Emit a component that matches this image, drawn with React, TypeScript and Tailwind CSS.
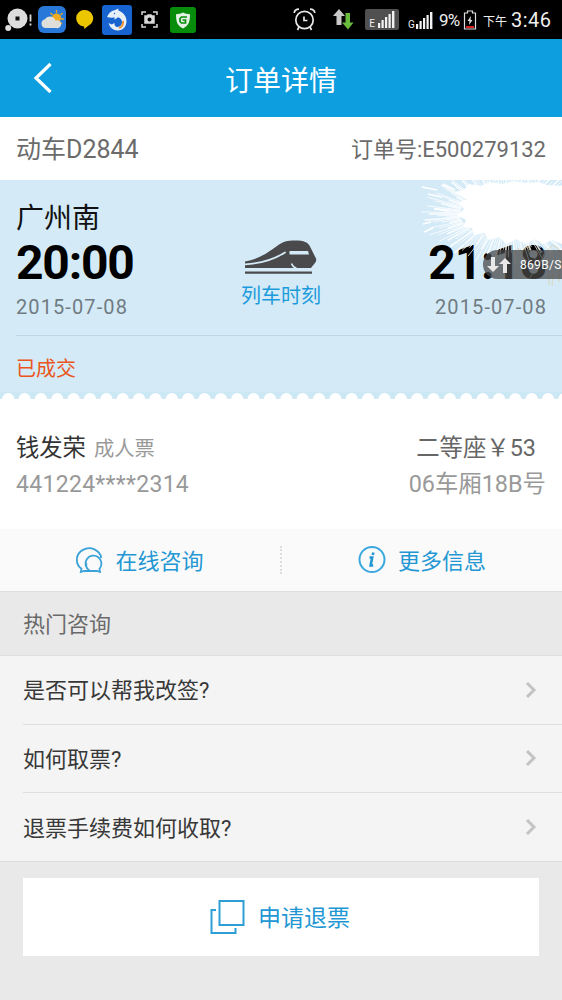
import type { ReactNode } from "react";

const questions = ["是否可以帮我改签?", "如何取票?", "退票手续费如何收取?"];

// spark strokes radiating from the burst behind the arrival station
const sparks = Array.from({ length: 150 }, (_, i) => {
  const angle = (i / 150) * Math.PI * 2;
  const reach = 0.8 + ((i * 37) % 29) / 75;
  return {
    x1: 90 + Math.cos(angle) * 50,
    y1: 34 + Math.sin(angle) * 24,
    x2: 90 + Math.cos(angle) * 76 * reach,
    y2: 34 + Math.sin(angle) * 44 * reach,
  };
});

function SignalIcon({ label, className }: { label: string; className: string }) {
  return (
    <div className={`flex shrink-0 items-end ${className}`}>
      <span className="text-[10px] leading-[9px]">{label}</span>
      <svg className="h-[17px] w-[18px]" viewBox="0 0 18 17" fill="#f2f2f2">
        <rect x="1" y="12" width="2.200" height="5" />
        <rect x="4.500" y="9" width="2.200" height="8" />
        <rect x="8" y="6" width="2.200" height="11" />
        <rect x="11.500" y="3" width="2.200" height="14" />
        <rect x="15" y="0" width="2.400" height="17" />
      </svg>
    </div>
  );
}

function StatusBar() {
  return (
    <div className="flex h-[39px] shrink-0 items-center bg-black text-[#eee]">
      <svg className="ml-[5px] h-6 w-7 shrink-0" viewBox="0 0 28 24">
        <circle cx="12.500" cy="10.500" r="10" fill="#ddd" />
        <rect x="10.500" y="8.500" width="4" height="4" fill="#111" />
        <circle cx="3.200" cy="20" r="3" fill="#ddd" />
        <path d="M25.500 6.500v7M25.500 15.500v2" stroke="#ddd" strokeWidth="1.800" />
      </svg>
      <svg className="ml-[5px] h-[27px] w-7 shrink-0" viewBox="0 0 28 27">
        <rect width="28" height="27" rx="6" fill="#2878da" />
        <path d="M18.500 4v3M12.500 7l2 2M24.500 7l-2 2M26 13h-3M24 18l-2-2" stroke="#e6a820" strokeWidth="1.300" />
        <circle cx="18.500" cy="12" r="4.600" fill="#f0ab20" />
        <path d="M7.500 22a4.500 4.500 0 0 1-.7-8.800 6 6 0 0 1 10.700 1.300A4 4 0 1 1 18 22z" fill="#dedfda" />
      </svg>
      <svg className="ml-[10px] h-[19px] w-[18px] shrink-0" viewBox="0 0 18 19">
        <path d="M9 0a8.300 8.300 0 0 1 3 16L8.500 19 8 16.600A8.300 8.300 0 0 1 9 0z" fill="#ecc600" />
      </svg>
      <svg className="ml-2 h-[30px] w-[30px] shrink-0" viewBox="0 0 30 30">
        <rect width="30" height="30" rx="3" fill="#1763cf" />
        <path
          d="M5 12c1.500-3.500 4-6 7.500-6.700L16.500 3.500c-.3 1.300-.2 1.900.4 2.200C21.500 7.500 24.500 11.500 24.500 16c0 5.500-3.500 9.500-8.500 9.500-3.500 0-6-1.500-8-4l-1.500-3.500 3.200 1.500 2.800-1.500c-.3 2 .8 4 3 4 2.800 0 4.500-2 4.500-4.700 0-2.500-1.500-4.300-4-5l-3.500 2.500c-.2-1 0-1.700.3-2.300-2.500.2-5 .3-7.800-.5z"
          fill="#e6eef8"
        />
        <path d="M21 16c.5 3.500-1 5.800-4 7" stroke="#ef9236" strokeWidth="2" fill="none" />
        <circle cx="12.500" cy="8.500" r=".7" fill="#1763cf" />
      </svg>
      <svg className="ml-[9px] h-[17px] w-[17px] shrink-0" viewBox="0 0 17 17" fill="none" stroke="#d8d8d8" strokeWidth="1.500">
        <path d="M1 4V1h4M12 1h4v3M1 13v3h4M12 16h4v-3" />
        <path d="M4 5h2l1-1h3l1 1h2v7H4z" fill="#d8d8d8" />
        <circle cx="8.500" cy="8.500" r="2" fill="#000" stroke="none" />
      </svg>
      <svg className="ml-[12px] h-[26px] w-[26px] shrink-0" viewBox="0 0 26 26">
        <rect width="26" height="26" rx="3" fill="#078d0b" />
        <path d="M13 5.500c2 1.300 4.500 1.700 7 1.700 0 7-1 11.300-7 14.300-6-3-7-7.300-7-14.300 2.500 0 5-.4 7-1.700z" fill="#e5f1e5" />
        <path d="M17 10h-5.500l-1.500 1.500v3l1.500 1.500h4v-3h-3" fill="none" stroke="#078d0b" strokeWidth="1.700" />
      </svg>

      <svg className="ml-[97px] h-[23px] w-[23px] shrink-0" viewBox="0 0 23 23" fill="none" stroke="#e8e8e8" strokeWidth="1.700">
        <circle cx="11.500" cy="12" r="8.700" />
        <path d="M1.200 5C1.500 2.500 3 1.300 6 1.200M21.800 5C21.500 2.500 20 1.300 17 1.200M6 19l-1.500 3M17 19l1.500 3M11 8.500v4h3.500" />
      </svg>
      <svg className="ml-[17px] h-[21px] w-[21px] shrink-0" viewBox="0 0 21 21">
        <path d="M6 0l6 7H8.500v9h-5V7H0z" fill="#c9c9c9" />
        <path d="M12.500 4h4.500v9.500h3.500L15 20.500l-6-7h3.500z" fill="#68bb3c" />
      </svg>
      <SignalIcon label="E" className="ml-[11px] h-[21px] w-[34px] justify-center gap-[2px] rounded-[2px] bg-[#505050] pb-0.5" />
      <SignalIcon label="G" className="ml-[9px] h-[18px] w-[27px]" />
      <span className="ml-[4px] w-[24px] shrink-0 text-[17px] leading-5 tracking-[-0.800px]">9%</span>
      <svg className="h-5 w-[14px] shrink-0" viewBox="0 0 14 20">
        <path d="M4.500 3V1h5v2h3v16h-11V3z" fill="none" stroke="#ddd" strokeWidth="1.200" />
        <path d="M3 17h8" stroke="#d22" strokeWidth="2" />
        <path d="M8 6l-3.500 5h2L6 15l3.500-5h-2z" fill="#e5e5e5" />
      </svg>
      <span className="mt-1 ml-[6px] w-[28px] shrink-0 text-[12px] leading-5">下午</span>
      <span className="shrink-0 text-[20px] leading-6 tracking-[0.500px]">3:46</span>
    </div>
  );
}

function TrainIcon() {
  return (
    <svg className="h-[36px] w-[74px]" viewBox="0 0 74 36">
      <path
        d="M1 21.500C15 19 25 12 33 6 39 1.500 43 .5 51 .5c9 0 13 1.500 15.500 7l5.500 11c1.200 3-1.500 5-3.500 7.500L67 28H1z"
        fill="#4a4a4c"
      />
      <path d="M1 24.300C17 23.500 29 20 41 12.500" fill="none" stroke="#d4eaf7" strokeWidth="1.800" strokeLinecap="round" />
      <path d="M45.500 11h18.500l1 3.400H45.500z" fill="#d4eaf7" />
      <path d="M47.500 23.500c1 2.500 2 4 5 4.700" fill="none" stroke="#d4eaf7" strokeWidth="1.600" />
      <path d="M1 32.700h67" stroke="#4a4a4c" strokeWidth="2.200" />
    </svg>
  );
}

function Sparkler() {
  return (
    <svg className="absolute top-0 right-0 h-[110px] w-[142px]" viewBox="0 0 142 110" stroke="#fff">
      <path
        d="M34 12l10-2 5-6 12 2 8-4 14 2 10-3 12 2 14-1 8 3 15 1v58l-10-4-9 4-8-5-9 5-10-5-9 5-8-7-10 3-5-7-10 2-2-7-9-1 3-7-9-5 7-6-5-6 8-4z"
        fill="#fff"
        stroke="none"
      />
      {sparks.map((s, i) => (
        <line key={i} x1={s.x1} y1={s.y1} x2={s.x2} y2={s.y2} strokeWidth={i % 3 === 0 ? 1.6 : 0.9} strokeOpacity=".85" />
      ))}
      <path d="M2 7l15 3M8 14l14 3M3 44l8-2M4 52l9-4M14 29l15 2M23 4l12 6" strokeWidth="1.500" />
      <path
        d="M97 68l5 3 5-4M108 66l3 6M128 70l4-5 6 3 3 7M115 78v10M124 74l-4 11M110 98l4-8M129 96v9M133 94l-1 12M139 90v12"
        fill="none"
        stroke="#d9cfa6"
        strokeOpacity=".7"
      />
    </svg>
  );
}

function TicketEdge() {
  return (
    <svg className="block h-[7px] w-full" viewBox="0 0 562 7" preserveAspectRatio="none">
      <rect width="562" height="6.500" fill="#cce8f5" />
      {Array.from({ length: 35 }, (_, i) => (
        <ellipse key={i} cx={8.2 + i * 16.36} cy="6.800" rx="6" ry="5.800" fill="#fff" />
      ))}
    </svg>
  );
}

function Action({ icon, label }: { icon: ReactNode; label: string }) {
  return (
    <button type="button" className="flex flex-1 items-center justify-center gap-3 text-[22px] leading-8 text-[#2397d3]">
      {icon}
      <span className="mt-[3px]">{label}</span>
    </button>
  );
}

export default function App() {
  return (
    <div className="flex h-[1000px] w-[562px] flex-col overflow-hidden bg-[#e9e9e9] font-[Roboto,'Noto_Sans_CJK_SC',sans-serif]">
      <StatusBar />

      <header className="grid h-[78px] shrink-0 grid-cols-[1fr_auto_1fr] items-center bg-[#0c9edf] text-white">
        <svg className="ml-[33px] h-8 w-5" viewBox="0 0 20 32" fill="none" stroke="currentColor" strokeWidth="3.200">
          <path d="M17.500 2L3 16l14.500 14" />
        </svg>
        <h1 className="pt-[7px] text-[28px] leading-10">订单详情</h1>
      </header>

      <div className="flex h-[63px] shrink-0 items-center justify-between bg-white px-4 pt-[3px] text-[#6b6b6b]">
        <span className="text-[25px] leading-8">动车D2844</span>
        <span className="text-[22px] leading-8">订单号:E500279132</span>
      </div>

      <section className="relative h-[212px] shrink-0 bg-[#d4eaf7] pl-4">
        <div className="flex h-[156px] justify-between border-b border-[#bfd7e4] pt-4 pr-4">
          <div className="w-[130px]">
            <div className="h-10 pt-[3px] text-[28px] leading-[40px] text-[#111]">广州南</div>
            <div className="text-[48px] leading-[54px] font-bold tracking-[-1.200px] text-black">20:00</div>
            <div className="mt-[3px] text-[20px] leading-7 tracking-[1.100px] text-[#707b82]">2015-07-08</div>
          </div>
          <div className="flex flex-col items-center pt-[44px] text-[#1c9bdc]">
            <TrainIcon />
            <span className="mt-1 text-[20px] leading-8">列车时刻</span>
          </div>
          <div className="w-[130px] pt-[40px] text-right">
            <div className="text-[48px] leading-[54px] font-bold tracking-[-1.200px] text-black">21:18</div>
            <div className="mt-[3px] -mr-px text-[20px] leading-7 tracking-[1.100px] text-[#707b82]">2015-07-08</div>
          </div>
        </div>
        <div className="pt-[17px] text-[20px] leading-8 text-[#ea5520]">已成交</div>

        <Sparkler />
        <div className="absolute top-[70px] right-0 flex h-[29px] w-[79px] items-center rounded-l-full bg-[#484848]/75 pl-1 text-white">
          <svg className="h-4 w-6 shrink-0" viewBox="0 0 24 16" fill="#e8e8e8">
            <path d="M4 0h4v9h4l-6 6-6-6h4z" />
            <path d="M16 16h4V7h4l-6-6-6 6h4z" />
          </svg>
          <span className="ml-[9px] text-[12px] leading-4 tracking-[0.300px] whitespace-nowrap">869B/S</span>
        </div>
      </section>
      <TicketEdge />

      <section className="flex h-[130px] shrink-0 justify-between bg-white px-4 pt-[31px]">
        <div>
          <div className="flex items-baseline gap-2 leading-9">
            <span className="text-[23.300px] text-[#333]">钱发荣</span>
            <span className="text-[20.300px] text-[#999]">成人票</span>
          </div>
          <div className="text-[23px] leading-9 tracking-[0.300px] text-[#999]">441224****2314</div>
        </div>
        <div className="text-right text-[23.400px] leading-9">
          <div className="pr-[10px] text-[#666]">二等座￥53</div>
          <div className="text-[#999]">06车厢18B号</div>
        </div>
      </section>

      <div className="flex h-[62px] shrink-0 items-center bg-[#fafafa]">
        <Action
          label="在线咨询"
          icon={
            <svg className="h-[27px] w-[27px]" viewBox="0 0 27 27" fill="none" stroke="#3aa2d8" strokeWidth="1.800">
              <path d="M25.300 11A12.300 11.500 0 1 0 5.500 21.800L4.800 25l3.200-1h6.500" />
              <path d="M13.500 23.500A8 8 0 1 1 23.500 21.800L24 25l-3.200-1H14.500C11 22.500 9.800 19.500 10.300 16" />
            </svg>
          }
        />
        <div className="h-7 border-l-2 border-dotted border-[#ddd]" />
        <Action
          label="更多信息"
          icon={
            <svg className="h-[28px] w-[28px]" viewBox="0 0 28 28" fill="none" stroke="#3aa8df" strokeWidth="2">
              <circle cx="14" cy="13.500" r="12.500" />
              <path d="M11.500 11.500h2.700l-1.600 8h2.600M15.300 6.500l-.5 2.600" stroke="#2497d2" strokeWidth="2.600" />
            </svg>
          }
        />
      </div>

      <h2 className="flex h-[65px] shrink-0 items-center border-y border-[#dedede] pt-[3px] pl-[23px] text-[22px] leading-8 text-[#696969]">
        热门咨询
      </h2>
      <ul className="h-[206px] shrink-0 divide-y divide-[#dfdfdf] border-b border-[#dcdcdc] bg-[#f4f4f4] pl-[23px]">
        {questions.map((question) => (
          <li key={question} className="flex h-[68.500px] items-center justify-between pr-[25px] text-[22px] leading-8 text-[#383838]">
            <span className="pt-[3px]">{question}</span>
            <svg className="h-4 w-3" viewBox="0 0 12 16" fill="none" stroke="#c3c3c3" strokeWidth="3">
              <path d="M2 1l7 7-7 7" />
            </svg>
          </li>
        ))}
      </ul>

      <button
        type="button"
        className="mx-[23px] mt-[16px] flex h-[78px] shrink-0 items-center justify-center gap-[13px] bg-white pr-0.5 text-[23px] leading-8 text-[#2397d3]"
      >
        <svg className="h-[35px] w-[35px]" viewBox="0 0 35 35" fill="none" stroke="#2e9fd4" strokeWidth="2">
          <rect x="9.500" y="1" width="24" height="24" />
          <path d="M6 10H1.500V33H25.500V28" />
        </svg>
        <span className="mt-[3px]">申请退票</span>
      </button>
    </div>
  );
}
